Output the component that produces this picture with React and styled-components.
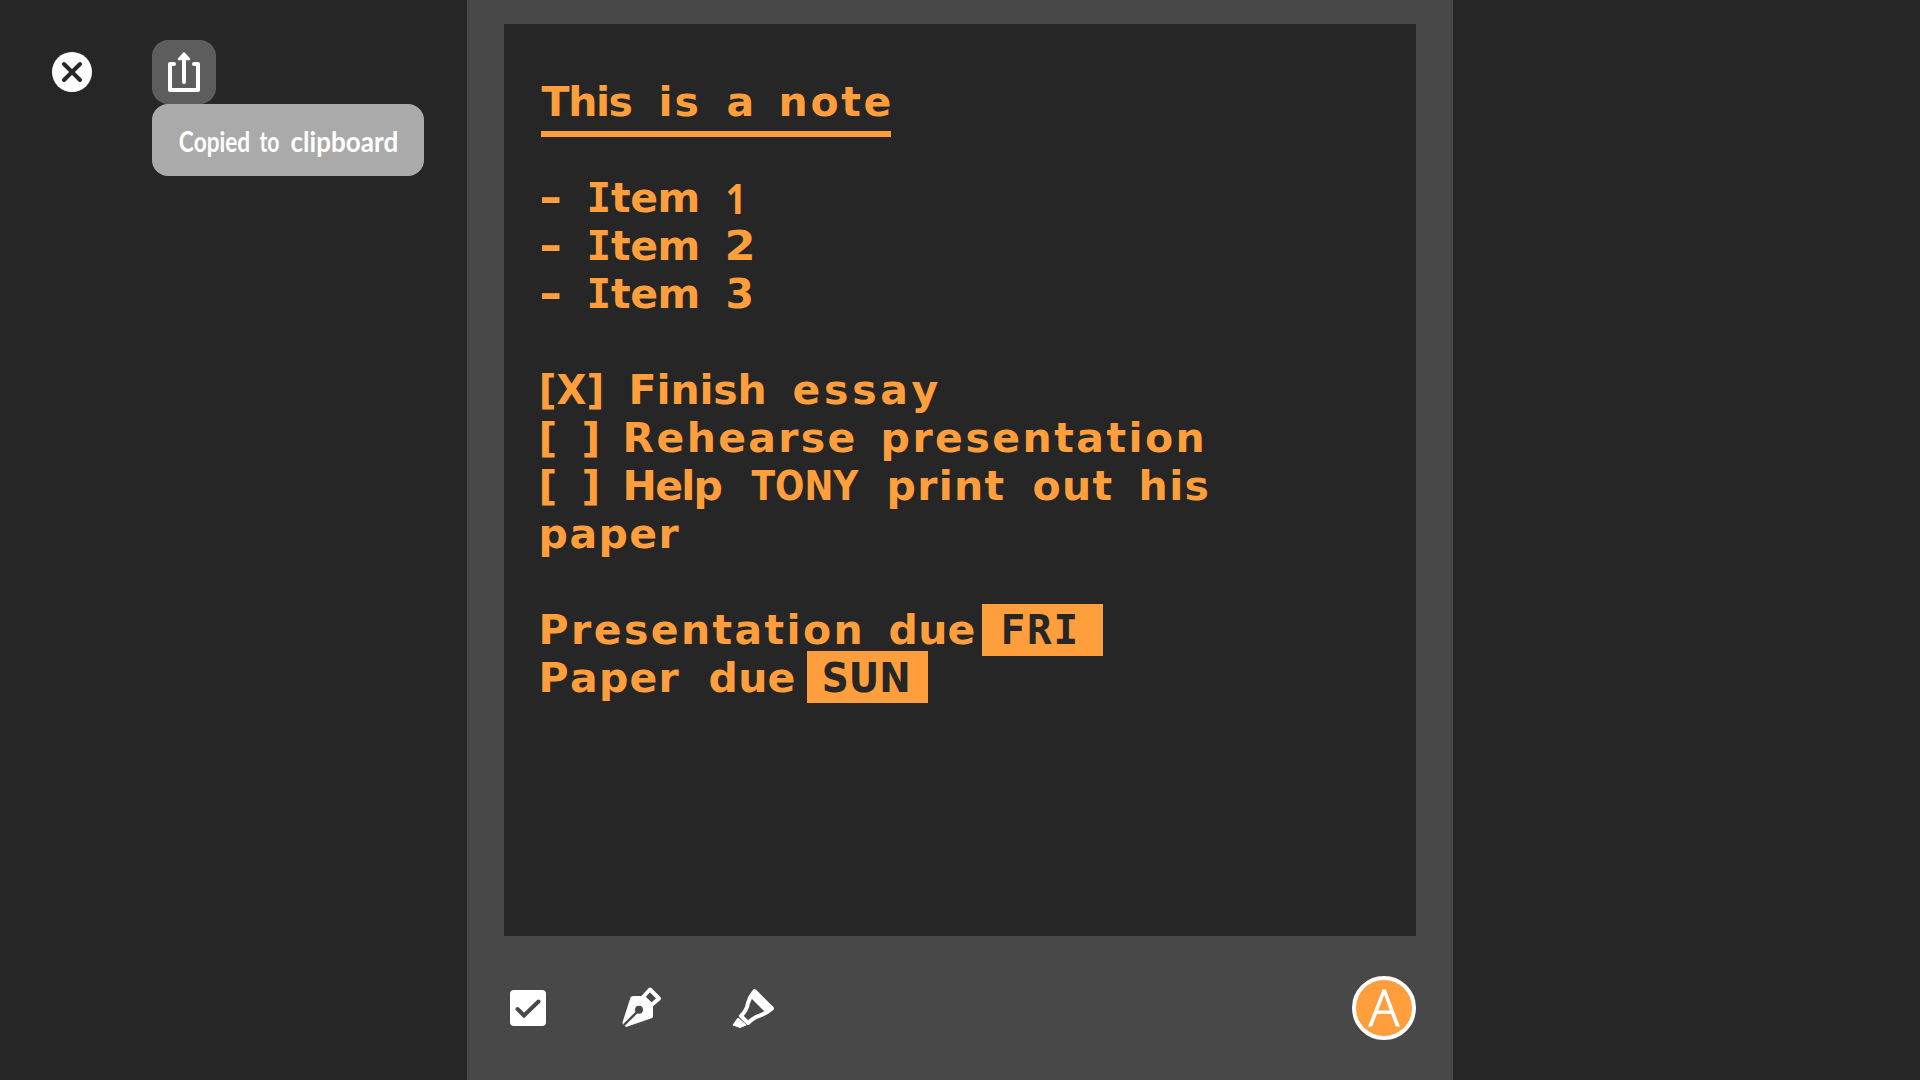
import React, { useLayoutEffect, useState } from "react";
import styled, { createGlobalStyle } from "styled-components";

const ORANGE = "#ff9e3d";
const INK = "#262626";
const NOTE_FONT = '"DejaVu Sans", sans-serif';
const CAPS_FONT = '"DejaVu Sans Mono", monospace';
const DIGIT_FONT = '"Open Sans", sans-serif';
const HAND_FONT = "Lato, sans-serif";

const GlobalStyle = createGlobalStyle`
  * { box-sizing: border-box; }
  body { margin: 0; background: ${INK}; overflow: hidden; }
`;

const Screen = styled.div`
  display: grid;
  grid-template-columns: 467px 986px 1fr;
  height: 1080px;
  background: ${INK};
`;

const Sidebar = styled.aside`
  display: flex;
  align-items: flex-start;
  gap: 60px;
  padding: 40px 0 0 52px;
`;

const CloseButton = styled.button`
  display: flex;
  width: 40px;
  height: 40px;
  margin-top: 12px;
  padding: 0;
  border: 0;
  border-radius: 50%;
  background: #fff;
`;

const ShareGroup = styled.div`
  display: flex;
  flex-direction: column;
`;

const ShareButton = styled.button`
  width: 64px;
  height: 64px;
  padding: 0;
  border: 0;
  border-radius: 16px;
  background: #5d5d5d;
  svg { display: block; }
`;

const Toast = styled.div`
  display: flex;
  width: 272px;
  height: 72px;
  padding: 14px 0 0 27px;
  border-radius: 16px;
  background: #aaaaaa;
  color: #fff;
`;

const Main = styled.main`
  display: flex;
  flex-direction: column;
  padding: 24px 37px 0;
  background: #484848;
`;

const Note = styled.article`
  display: flex;
  flex-direction: column;
  align-items: flex-start;
  height: 912px;
  padding: 55px 37px 0;
  background: ${INK};
  color: ${ORANGE};
`;

const Title = styled.h1`
  display: flex;
  width: 350px;
  height: 58px;
  margin: 0 0 38px;
  border-bottom: 6px solid ${ORANGE};
`;

const Line = styled.div`
  display: flex;
  height: 48px;
`;

const Mark = styled.mark`
  display: flex;
  width: 121px;
  height: 52px;
  margin: ${(p) => p.$top}px 0 0 ${(p) => p.$gap}px;
  padding: ${(p) => -p.$top}px 0 0 ${(p) => p.$inset}px;
  background: ${ORANGE};
  color: ${INK};
`;

const WordBox = styled.span`
  display: block;
  flex: none;
  width: ${(p) => p.$width}px;
  margin-left: ${(p) => p.$gap}px;
  font: bold ${(p) => p.$size}px/46px ${(p) => p.$font};
  font-kerning: none;
  font-variant-ligatures: none;
  white-space: nowrap;
  transform-origin: left center;
  ${(p) => p.$slab && `&::first-letter { font-family: ${CAPS_FONT}; }`}
`;

const Toolbar = styled.footer`
  display: flex;
  align-items: center;
  height: 144px;
`;

const Tool = styled.button`
  width: 48px;
  height: 48px;
  margin-right: 64px;
  padding: 0;
  border: 0;
  background: none;
  svg { display: block; }
`;

const Avatar = styled.div`
  display: flex;
  justify-content: center;
  width: 64px;
  height: 64px;
  margin-left: auto;
  border: 4px solid #fff;
  border-radius: 50%;
  background: ${ORANGE};
  color: #fff;
  font: 300 50px/54px "Open Sans", sans-serif;
  -webkit-text-stroke: 1.2px #fff;
`;

/* Fits a word so that its ink fills the given width: by tracking, or by
   scaling the letters when `scaled` is set. */
function Word({ children, w, gap = 0, size = 41, font = NOTE_FONT, slab, scaled }) {
  const [fit, setFit] = useState({});
  useLayoutEffect(() => {
    const ctx = document.createElement("canvas").getContext("2d");
    const measure = (text, family) => {
      ctx.font = `bold ${size}px ${family}`;
      ctx.fontKerning = "none";
      return ctx.measureText(text);
    };
    const m = measure(children, font);
    let left = m.actualBoundingBoxLeft;
    let ink = left + m.actualBoundingBoxRight;
    if (slab) {
      const plain = measure(children[0], font);
      const slabbed = measure(children[0], CAPS_FONT);
      ink += slabbed.width - plain.width + slabbed.actualBoundingBoxLeft - left;
      left = slabbed.actualBoundingBoxLeft;
    }
    const n = children.length;
    const textIndent = left + 0.6;
    setFit(
      scaled
        ? { transform: `scaleX(${w / ink})`, textIndent }
        : { letterSpacing: n > 1 ? (w - ink) / (n - 1) : 0, textIndent }
    );
  }, [children, w, size, font, slab, scaled]);
  return (
    <WordBox $width={w} $gap={gap} $size={size} $font={font} $slab={slab} style={fit}>
      {children}
    </WordBox>
  );
}

const items = [
  { digit: "1", width: 13, font: DIGIT_FONT },
  { digit: "2", width: 24 },
  { digit: "3", width: 24 },
];

export default function App() {
  return (
    <>
      <GlobalStyle />
      <Screen>
        <Sidebar>
          <CloseButton aria-label="Close">
            <svg width="40" height="40" viewBox="0 0 40 40">
              <path d="M12 12 28 28M28 12 12 28" stroke={INK} strokeWidth="4" strokeLinecap="round" />
            </svg>
          </CloseButton>
          <ShareGroup>
            <ShareButton aria-label="Share">
              <svg width="64" height="64" viewBox="0 0 64 64" fill="none" stroke="#fff" strokeWidth="4" strokeLinecap="round" strokeLinejoin="round">
                <path d="M22 24H18V50H46V24H42M32 16V42" />
                <path d="M32 13.500 27 19H37Z" fill="#fff" strokeWidth="2.500" />
              </svg>
            </ShareButton>
            <Toast>
              <Word w={70} size={28} font={HAND_FONT} scaled>Copied</Word>
              <Word w={20} gap={10} size={28} font={HAND_FONT} scaled>to</Word>
              <Word w={107} gap={11} size={28} font={HAND_FONT} scaled>clipboard</Word>
            </Toast>
          </ShareGroup>
        </Sidebar>

        <Main>
          <Note>
            <Title>
              <Word w={90}>This</Word>
              <Word w={36} gap={30}>is</Word>
              <Word w={24} gap={30}>a</Word>
              <Word w={108} gap={30}>note</Word>
            </Title>
            {items.map(({ digit, width, font }) => (
              <Line key={digit}>
                <Word w={18} scaled>-</Word>
                <Word w={108} gap={30} slab>Item</Word>
                <Word w={width} gap={30} font={font} scaled>{digit}</Word>
              </Line>
            ))}
            <Line />
            <Line>
              <Word w={60} scaled>[X]</Word>
              <Word w={132} gap={30}>Finish</Word>
              <Word w={144} gap={30}>essay</Word>
            </Line>
            <Line>
              <Word w={12}>[</Word>
              <Word w={12} gap={30}>]</Word>
              <Word w={228} gap={30}>Rehearse</Word>
              <Word w={318} gap={30}>presentation</Word>
            </Line>
            <Line>
              <Word w={12}>[</Word>
              <Word w={12} gap={30}>]</Word>
              <Word w={96} gap={30}>Help</Word>
              <Word w={108} gap={30} scaled>TONY</Word>
              <Word w={114} gap={30}>print</Word>
              <Word w={78} gap={30}>out</Word>
              <Word w={66} gap={30}>his</Word>
            </Line>
            <Line>
              <Word w={138}>paper</Word>
            </Line>
            <Line />
            <Line>
              <Word w={318}>Presentation</Word>
              <Word w={84} gap={30}>due</Word>
              <Mark $gap={9} $top={-3} $inset={21}>
                <Word w={72} font={CAPS_FONT}>FRI</Word>
              </Mark>
            </Line>
            <Line>
              <Word w={138}>Paper</Word>
              <Word w={84} gap={30}>due</Word>
              <Mark $gap={14} $top={-4} $inset={16}>
                <Word w={84} scaled>SUN</Word>
              </Mark>
            </Line>
          </Note>
          <Toolbar>
            <Tool aria-label="Checklist">
              <svg width="48" height="48" viewBox="504 984 48 48">
                <rect x="510" y="990" width="36" height="36" rx="4" fill="#fff" />
                <path d="M517.5 1009 524 1015.5 538.5 1001.5" fill="none" stroke="#484848" strokeWidth="4" strokeLinecap="round" />
              </svg>
            </Tool>
            <Tool aria-label="Pen">
              <svg width="48" height="48" viewBox="616 984 48 48">
                <path d="M622.3 1023 630.5 997.5Q631.2 996 633 996H643L653 1006.5V1016Q653 1017.800 651.500 1018.300L626 1027Z" fill="#fff" />
                <path d="M624 1025 638 1011" stroke="#484848" strokeWidth="2.400" />
                <circle cx="639" cy="1009.700" r="4" fill="#484848" />
                <path d="M650 989.500 659 998.500 651.500 1005 643 997Z" fill="none" stroke="#fff" strokeWidth="4" strokeLinejoin="round" />
              </svg>
            </Tool>
            <Tool aria-label="Highlighter">
              <svg width="48" height="48" viewBox="728 984 48 48">
                <path d="M754.500 991 772 1008.500Q767 1013 760 1015.500 754 1017 748 1023L741 1016Q747 1010 748 1003 750 996 754.500 991Z" fill="none" stroke="#fff" strokeWidth="4" strokeLinejoin="round" />
                <path d="M754.500 991 772 1008.500 765 1012 751 998Z" fill="#fff" />
                <path d="M738 1018 746 1025 740 1027.500 733 1025Z" fill="#fff" stroke="#fff" strokeLinejoin="round" />
              </svg>
            </Tool>
            <Avatar>A</Avatar>
          </Toolbar>
        </Main>
      </Screen>
    </>
  );
}
